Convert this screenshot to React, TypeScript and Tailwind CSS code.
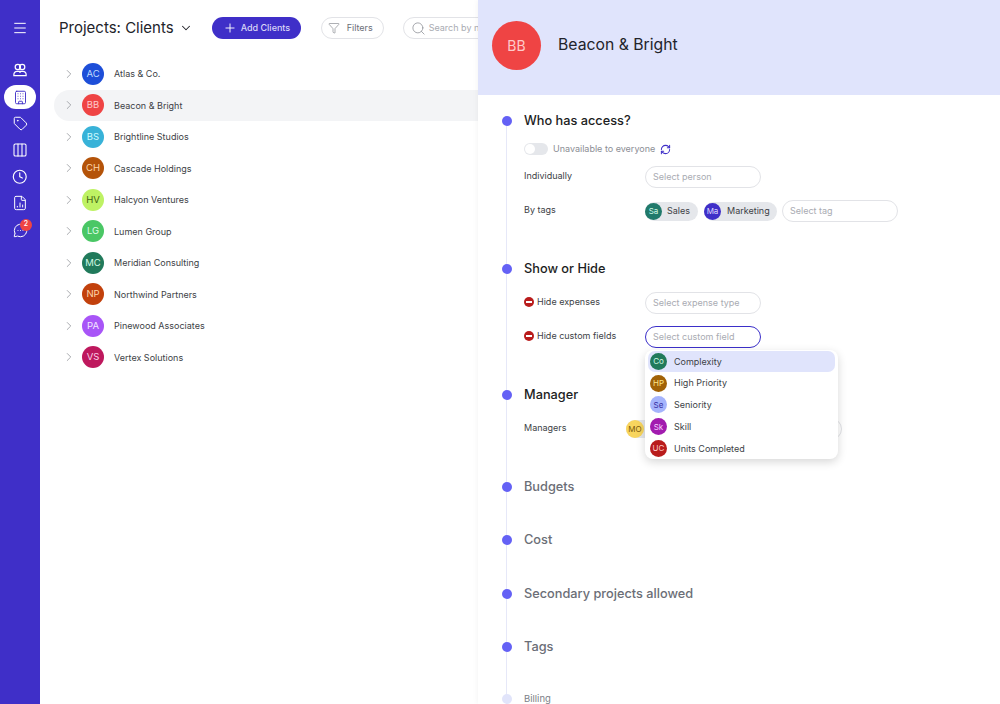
import type { ReactNode } from "react";
import { Menu, Building, Tag, Columns3, Clock, FileChartColumn, MessageCircleMore, Plus, Funnel, Search, ChevronDown, ChevronRight, RefreshCw } from "lucide-react";

const clients = [
  ["AC", "Atlas & Co.", "bg-[#1d4ed8]", "text-[#bfdbfe]"],
  ["BB", "Beacon & Bright", "bg-[#ef4444]", "text-[#fecaca]"],
  ["BS", "Brightline Studios", "bg-[#38b2d8]", "text-[#cffafe]"],
  ["CH", "Cascade Holdings", "bg-[#b45309]", "text-[#fed7aa]"],
  ["HV", "Halcyon Ventures", "bg-[#bef264]", "text-[#3f6212]"],
  ["LG", "Lumen Group", "bg-[#4ac765]", "text-[#dcfce7]"],
  ["MC", "Meridian Consulting", "bg-[#217a5b]", "text-[#d1fae5]"],
  ["NP", "Northwind Partners", "bg-[#c2410c]", "text-[#fed7aa]"],
  ["PA", "Pinewood Associates", "bg-[#a855f7]", "text-[#f3e8ff]"],
  ["VS", "Vertex Solutions", "bg-[#be185d]", "text-[#fbcfe8]"],
];

const options = [
  ["Co", "Complexity", "bg-[#217a5b]", "text-[#d1fae5]"],
  ["HP", "High Priority", "bg-[#a16207]", "text-[#fde68a]"],
  ["Se", "Seniority", "bg-[#a5b4fc]", "text-[#3730a3]"],
  ["Sk", "Skill", "bg-[#a21caf]", "text-[#f5d0fe]"],
  ["UC", "Units Completed", "bg-[#b91c1c]", "text-[#fecaca]"],
];

function UsersIcon() {
  return (
    <svg width="14" height="14" viewBox="0 0 16 16" fill="none" stroke="white" strokeWidth="1.4">
      <circle cx="5.5" cy="4.5" r="3" />
      <circle cx="10.5" cy="4.5" r="3" />
      <path d="M1 14.5v-1.5a3.5 3.5 0 0 1 3.5-3.5h7a3.5 3.5 0 0 1 3.5 3.5v1.5z" />
      <path d="M8 9.5v2" />
    </svg>
  );
}

function MinusDot() {
  return (
    <span className="flex h-[10px] w-[10px] items-center justify-center rounded-full bg-[#b91c1c]">
      <span className="h-[2px] w-[6px] bg-white" />
    </span>
  );
}

function Field({ text, w = "w-[116px]", active = false }: { text: string; w?: string; active?: boolean }) {
  return (
    <div className={`flex h-[22px] items-center rounded-full bg-white pl-[7px] text-[9px] text-[#a9abb2] ${w} ${active ? "border-[1.5px] border-[#3b2fc9]" : "border border-[#e2e3e7]"}`}>
      {text}
    </div>
  );
}

function Section({ title, muted = false, small = false, className = "", children }: { title: string; muted?: boolean; small?: boolean; className?: string; children?: ReactNode }) {
  return (
    <section className={`relative ${className}`}>
      <span className={`absolute left-[-22.5px] top-[6px] h-[10px] w-[10px] rounded-full ${small ? "bg-[#e1e4fa]" : "bg-[#6461f5]"}`} />
      <h2 className={`h-[22px] leading-[22px] ${small ? "text-[9.5px] text-[#7c7f87]" : muted ? "text-[12.75px] font-medium text-[#6b6e76]" : "text-[12.75px] font-medium text-[#1c1d22]"}`}>{title}</h2>
      {children}
    </section>
  );
}

export default function App() {
  return (
    <div className="relative flex h-[704px] w-[1000px] overflow-hidden bg-white text-[#3d3f46]" style={{ fontFamily: '"Inter", "Liberation Sans", sans-serif' }}>
      <nav className="flex w-[40px] shrink-0 flex-col items-center bg-[#3f2fc8] pt-[19.5px] text-white">
        <Menu size={16} strokeWidth={1.5} />
        <div className="mt-[21.5px] flex flex-col items-center">
          <div className="flex h-[26px] w-[32px] items-center justify-center"><UsersIcon /></div>
          <div className="mt-[2px] flex h-[24px] w-[32px] items-center justify-center rounded-full bg-white text-[#3f2fc8]"><Building size={15} strokeWidth={1.5} /></div>
          <div className="mt-[1px] flex h-[26.5px] items-center justify-center"><Tag size={15} strokeWidth={1.6} /></div>
          <div className="flex h-[26.5px] items-center justify-center"><Columns3 size={16} strokeWidth={1.6} /></div>
          <div className="flex h-[26.5px] items-center justify-center"><Clock size={15.5} strokeWidth={1.8} /></div>
          <div className="flex h-[26.5px] items-center justify-center"><FileChartColumn size={16} strokeWidth={1.5} /></div>
          <div className="relative flex h-[28px] items-center justify-center">
            <MessageCircleMore size={15} strokeWidth={1.6} />
            <span className="absolute left-[7.5px] top-[2.5px] flex h-[12px] w-[12px] items-center justify-center rounded-full bg-[#ef4444] text-[7px] font-medium">2</span>
          </div>
        </div>
      </nav>

      <main className="min-w-0 flex-1">
        <header className="flex h-[55px] items-center pl-[19px] pt-[1px]">
          <h1 className="text-[15px] text-[#22232a]">Projects: Clients</h1>
          <ChevronDown size={14} strokeWidth={1.8} className="ml-[5px] text-[#22232a]" />
          <button className="ml-[19px] flex h-[22px] w-[89px] items-center gap-[4px] rounded-full bg-[#3f2fc8] pl-[11px] text-[9px] font-medium text-[#d9d6f7]">
            <Plus size={14} strokeWidth={1.6} className="text-white" />Add Clients
          </button>
          <button className="ml-[20px] flex h-[22px] w-[63px] items-center gap-[7px] rounded-full border border-[#e2e3e7] pl-[6px] text-[9px] text-[#6b6e76]">
            <Funnel size={12} strokeWidth={1.1} />Filters
          </button>
          <div className="ml-[19px] flex h-[22px] w-[160px] shrink-0 items-center gap-[3px] rounded-full border border-[#e2e3e7] pl-[7px] text-[9px] text-[#a9abb2]">
            <Search size={15} strokeWidth={1.2} className="text-[#8a8c93]" />Search by name
          </div>
        </header>
        <ul className="ml-[14px] mt-[3px]">
          {clients.map(([i, n, bg, fg], idx) => (
            <li key={n} className={`flex h-[31.5px] items-center rounded-l-full pl-[8px] ${idx === 1 ? "bg-[#f3f4f6]" : ""}`}>
              <ChevronRight size={14} strokeWidth={1.3} className="text-[#8f9197]" />
              <span className={`ml-[6px] flex h-[22px] w-[22px] items-center justify-center rounded-full text-[9.5px] ${bg} ${fg}`}>{i}</span>
              <span className="ml-[10px] text-[9px]">{n}</span>
            </li>
          ))}
        </ul>
      </main>

      <aside className="absolute bottom-0 right-0 top-0 w-[522px] bg-white shadow-[0_0_6px_rgba(0,0,0,0.06)]">
        <div className="flex h-[95px] items-center bg-[#e0e4fc] pb-[5px] pl-[14px]">
          <span className="flex h-[49px] w-[49px] items-center justify-center rounded-full bg-[#ef4444] text-[14px] text-[#fecaca]">BB</span>
          <h2 className="ml-[17px] text-[15.75px] text-[#22232a]">Beacon &amp; Bright</h2>
        </div>

        <div className="relative ml-[28px] mt-[15px] pl-[18px]">
          <span className="absolute bottom-[-20px] left-0 top-[11px] w-px bg-[#e6e8f8]" />
          <Section title="Who has access?">
            <div className="mt-[10px] flex h-[14px] items-center text-[9px] text-[#8c8e95]">
              <span className="flex h-[12px] w-[24px] items-center rounded-full bg-[#e5e7eb] pl-[1px]"><span className="h-[10px] w-[10px] rounded-full bg-white" /></span>
              <span className="ml-[5px]">Unavailable to everyone</span>
              <RefreshCw size={11} strokeWidth={2.2} className="ml-[5px] text-[#3f2fc8]" />
            </div>
            <div className="mt-[10px] grid grid-cols-[121px_1fr] gap-y-[12px] text-[9px]">
              <span className="pt-[3px]">Individually</span>
              <Field text="Select person" />
              <span className="pt-[3px]">By tags</span>
              <div className="flex items-center">
                <span className="flex h-[19px] w-[53px] items-center rounded-full bg-[#e5e7eb]"><span className="flex h-[17px] w-[17px] items-center justify-center rounded-full bg-[#217a6b] text-[8px] text-[#d1fae5]">Sa</span><span className="ml-[5px]">Sales</span></span>
                <span className="ml-[6px] flex h-[19px] w-[73px] items-center rounded-full bg-[#e5e7eb]"><span className="flex h-[17px] w-[17px] items-center justify-center rounded-full bg-[#3f2fc8] text-[8px] text-[#ddd6fe]">Ma</span><span className="ml-[6px]">Marketing</span></span>
                <span className="ml-[5px]"><Field text="Select tag" /></span>
              </div>
            </div>
          </Section>

          <Section title="Show or Hide" className="mt-[36px]">
            <div className="mt-[12px] grid grid-cols-[121px_1fr] gap-y-[12px] text-[9px]">
              <span className="flex items-center gap-[3px] self-start pt-[3px]"><MinusDot />Hide expenses</span>
              <Field text="Select expense type" />
              <span className="flex items-center gap-[3px] self-start pt-[3px]"><MinusDot />Hide custom fields</span>
              <div className="relative">
                <Field text="Select custom field" active />
                <ul className="absolute left-0 top-[24px] z-10 h-[109px] w-[193px] rounded-[8px] bg-white pl-[3px] pt-[0.5px] shadow-[0_3px_10px_rgba(0,0,0,0.16)]">
                  {options.map(([i, n, bg, fg], idx) => (
                    <li key={n} className={`flex h-[21.75px] items-center rounded-[7px] pl-[2px] ${idx === 0 ? "w-[187px] bg-[#e0e4fc]" : ""}`}>
                      <span className={`flex h-[17px] w-[17px] items-center justify-center rounded-full text-[8px] ${bg} ${fg}`}>{i}</span>
                      <span className="ml-[7px]">{n}</span>
                    </li>
                  ))}
                </ul>
              </div>
            </div>
          </Section>

          <Section title="Manager" className="mt-[36px]">
            <div className="mt-[12px] flex h-[22px] items-center text-[9px]">
              <span className="w-[102px] pb-[3px]">Managers</span>
              <span className="flex h-[18px] w-[80px] items-center rounded-full bg-[#e5e7eb]">
                <span className="flex h-[18px] w-[18px] items-center justify-center rounded-full bg-[#f8d55e] text-[8px] text-[#78590b]">MO</span>
              </span>
              <span className="ml-[5px]"><Field text="" w="w-[131px]" /></span>
            </div>
          </Section>

          <Section title="Budgets" muted className="mt-[36px]" />
          <Section title="Cost" muted className="mt-[31px]" />
          <Section title="Secondary projects allowed" muted className="mt-[31.5px]" />
          <Section title="Tags" muted className="mt-[31.5px]" />
          <Section title="Billing" small className="mt-[30px]" />
        </div>
      </aside>
    </div>
  );
}
